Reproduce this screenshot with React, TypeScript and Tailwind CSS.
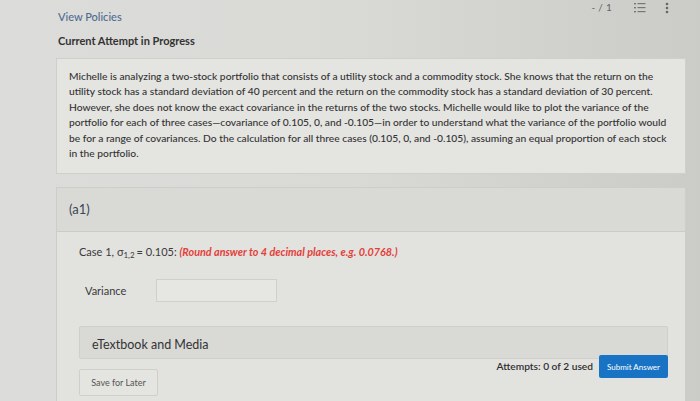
const lines = [
  "Michelle is analyzing a two-stock portfolio that consists of a utility stock and a commodity stock. She knows that the return on the",
  "utility stock has a standard deviation of 40 percent and the return on the commodity stock has a standard deviation of 30 percent.",
  "However, she does not know the exact covariance in the returns of the two stocks. Michelle would like to plot the variance of the",
  "portfolio for each of three cases\u2014covariance of 0.105, 0, and -0.105\u2014in order to understand what the variance of the portfolio would",
  "be for a range of covariances. Do the calculation for all three cases (0.105, 0, and -0.105), assuming an equal proportion of each stock",
  "in the portfolio.",
];

export default function App() {
  return (
    <div
      className="relative h-[401px] w-[700px] overflow-hidden bg-gradient-to-r from-[#dcdcda] via-[#d9d9d6] to-[#cbcbc7] text-[#2e2e2e]"
      style={{ fontFamily: "Lato, 'Open Sans', sans-serif" }}
    >
      {/* top toolbar */}
      <div className="absolute right-[31px] top-0 flex items-center text-[#666]">
        <span className="text-[10px] tracking-wide">- / 1</span>
        <svg width="12" height="11" viewBox="0 0 12 11" className="ml-[22px] text-[#777]">
          <g fill="currentColor">
            <rect x="0" y="1" width="2" height="1.4" />
            <rect x="0" y="5" width="2" height="1.4" />
            <rect x="0" y="9" width="2" height="1.4" />
            <rect x="3.5" y="1" width="8" height="1.2" />
            <rect x="3.5" y="5" width="8" height="1.2" />
            <rect x="3.5" y="9" width="8" height="1.2" />
          </g>
        </svg>
        <svg width="4" height="12" viewBox="0 0 4 12" className="ml-[19px] text-[#666]">
          <g fill="currentColor">
            <circle cx="2" cy="2" r="1.3" />
            <circle cx="2" cy="6" r="1.3" />
            <circle cx="2" cy="10" r="1.3" />
          </g>
        </svg>
      </div>

      <div className="flex flex-col pl-[56px] pr-[14px]">
        <div className="pl-[2px] pt-[10px] text-[11px] font-medium leading-[14px] text-[#4d6d91]">
          View Policies
        </div>
        <div className="mt-[10px] pl-[2px] text-[11px] font-bold leading-[14px] text-[#333]">
          Current Attempt in Progress
        </div>

        {/* question panel */}
        <div className="mt-[10px] border border-[#cfcfcc] bg-[#e4e4e1] px-[12px] pb-[12px] pt-[10px] text-[10.25px] font-medium leading-[15.4px] text-[#333]">
          {lines.map((l) => (
            <div key={l} className="whitespace-nowrap">
              {l}
            </div>
          ))}
        </div>

        {/* part a1 */}
        <div className="mt-[13px] border border-[#cdcdca] bg-[#e2e2df]">
          <div className="flex h-[44px] items-center border-b border-[#cbcbc8] bg-[#d9d9d6] px-[12px] text-[13px] text-[#3b4654]">
            (a1)
          </div>
          <div className="flex flex-col px-[22px] pb-[6px] pt-[12px]">
            <div className="flex items-baseline text-[11px] leading-[16px] text-[#3a3a3a]">
              <span>Case 1, σ</span>
              <sub className="text-[8px]">1,2</sub>
              <span className="ml-[2px]">= 0.105:&nbsp;</span>
              <span className="text-[10.8px] font-bold italic text-[#e2403a]">
                (Round answer to 4 decimal places, e.g. 0.0768.)
              </span>
            </div>
            <div className="mt-[19px] flex items-center pl-[6px]">
              <span className="w-[71px] text-[11px] text-[#3a3a3a]">Variance</span>
              <div className="h-[23px] w-[121px] border border-[#cfcfcc] bg-[#e6e6e3]" />
            </div>
            <div className="mr-[-5px] mt-[24px] flex h-[33px] items-center rounded-[2px] border border-[#cfcfcc] bg-[#d9d9d6] px-[12px] pt-[4px] text-[12.5px] text-[#333]">
              eTextbook and Media
            </div>
            <div className="flex items-start justify-between">
              <button className="mt-[10px] h-[27px] w-[79px] rounded-[2px] border border-[#cfcfcc] bg-[#e4e4e1] text-[9px] text-[#555]">
                Save for Later
              </button>
              <div className="mr-[-5px] mt-[-4px] flex items-center gap-[6px]">
                <span className="text-[10.2px] font-semibold text-[#2f2f2f]">
                  Attempts: 0 of 2 used
                </span>
                <button className="h-[23px] w-[69px] rounded-[2px] bg-[#1873c4] text-[8px] text-white">
                  Submit Answer
                </button>
              </div>
            </div>
          </div>
        </div>
      </div>
    </div>
  );
}
